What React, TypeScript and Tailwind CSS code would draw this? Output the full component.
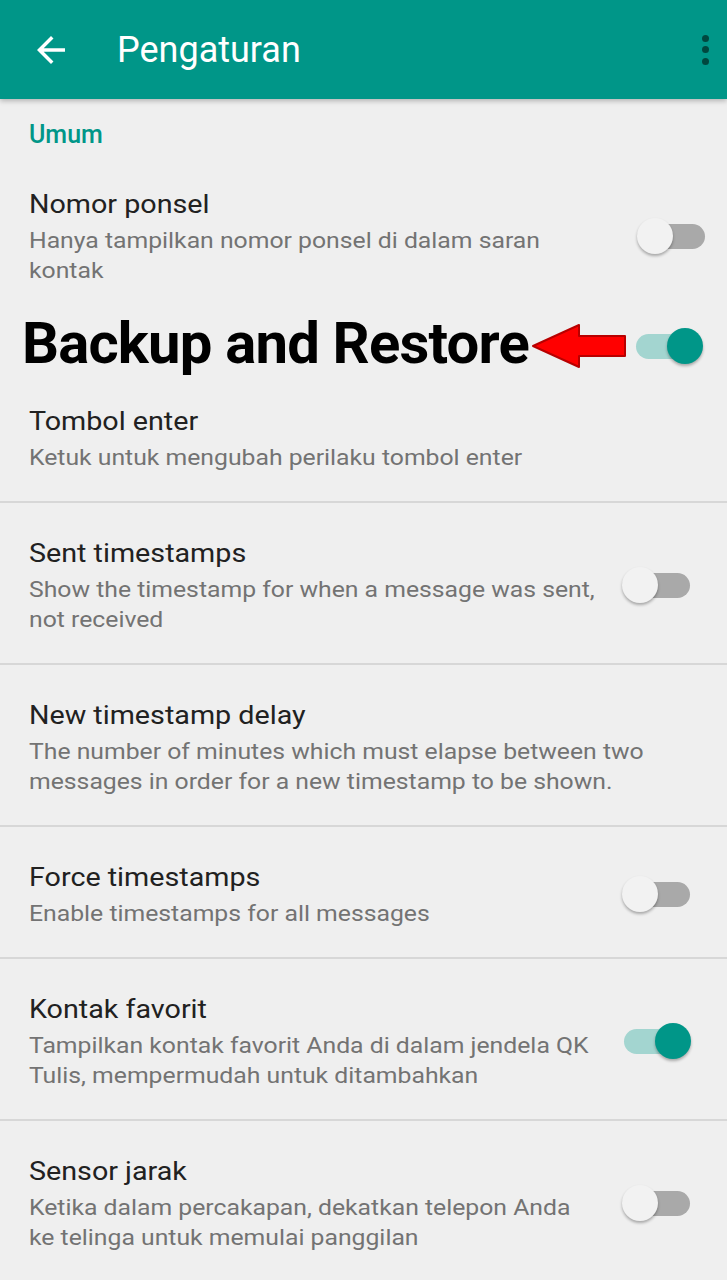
import React from "react";

// =============================================================================
// Settings data
// =============================================================================
type Row = {
  title: string;
  lines: string[];
  toggle?: "on" | "off";
};

const LOWER_ROWS: Row[] = [
  {
    title: "Sent timestamps",
    lines: ["Show the timestamp for when a message was sent,", "not received"],
    toggle: "off",
  },
  {
    title: "New timestamp delay",
    lines: [
      "The number of minutes which must elapse between two",
      "messages in order for a new timestamp to be shown.",
    ],
  },
  {
    title: "Force timestamps",
    lines: ["Enable timestamps for all messages"],
    toggle: "off",
  },
  {
    title: "Kontak favorit",
    lines: ["Tampilkan kontak favorit Anda di dalam jendela QK", "Tulis, mempermudah untuk ditambahkan"],
    toggle: "on",
  },
  {
    title: "Sensor jarak",
    lines: ["Ketika dalam percakapan, dekatkan telepon Anda", "ke telinga untuk memulai panggilan"],
    toggle: "off",
  },
];

// =============================================================================
// Pieces
// =============================================================================
function Toggle({ on }: { on: boolean }) {
  return (
    <div className="relative ml-auto h-[38px] w-[69px] shrink-0">
      <div
        className={
          on
            ? "absolute left-[2px] top-[7px] h-[25px] w-[60px] rounded-full bg-[#a3d5d0]"
            : "absolute right-[1px] top-[7px] h-[25px] w-[60px] rounded-full bg-[#a9a9a9]"
        }
      />
      <div
        className={
          on
            ? "absolute right-0 top-[1px] h-[36px] w-[36px] rounded-full bg-[#009688] shadow-[0_2px_3px_rgba(0,0,0,0.3)]"
            : "absolute left-0 top-[1px] h-[36px] w-[36px] rounded-full bg-[#f2f2f2] shadow-[0_2px_3px_rgba(0,0,0,0.3)]"
        }
      />
    </div>
  );
}

// the source text is a little wider than plain Roboto, so stretch it
function Texts({ title, lines }: { title: string; lines: string[] }) {
  return (
    <div className="min-w-0 origin-left scale-x-[1.125]">
      <div className="whitespace-nowrap text-[25.5px] leading-[36px] text-[#212121]">{title}</div>
      <div className="mt-[4px] text-[22px] leading-[30px] text-[#737373]">
        {lines.map((l) => (
          <div key={l} className="whitespace-nowrap">
            {l}
          </div>
        ))}
      </div>
    </div>
  );
}

function Divider() {
  return <div className="h-[2px] bg-[#d7d7d7]" />;
}

function RedArrow() {
  return (
    <svg width="96" height="46" viewBox="0 0 96 46" className="shrink-0">
      <path
        d="M2 23 L48 2 L48 13 L94 13 L94 33 L48 33 L48 44 Z"
        fill="#ff0000"
        stroke="#b80000"
        strokeWidth="2"
        strokeLinejoin="round"
      />
    </svg>
  );
}

// =============================================================================
// App
// =============================================================================
export default function App() {
  return (
    <div className="min-h-screen overflow-hidden bg-[#efefef] font-['Roboto',sans-serif]">
      {/* Toolbar */}
      <header className="relative z-10 flex h-[99px] items-center bg-[#009688] shadow-[0_2px_5px_rgba(0,0,0,0.25)]">
        <svg width="42" height="42" viewBox="0 0 24 24" className="ml-[30px] shrink-0" fill="#ffffff">
          <path d="M20 11H7.83l5.59-5.59L12 4l-8 8 8 8 1.41-1.41L7.83 13H20v-2z" />
        </svg>
        <h1 className="ml-[45px] text-[36px] leading-none text-white">Pengaturan</h1>
        <div className="ml-auto mr-[18px] flex flex-col items-center gap-[4.5px]">
          <span className="h-[7px] w-[7px] rounded-full bg-[#00483f]" />
          <span className="h-[7px] w-[7px] rounded-full bg-[#00483f]" />
          <span className="h-[7px] w-[7px] rounded-full bg-[#00483f]" />
        </div>
      </header>

      {/* Umum section */}
      <div className="px-[29px] pt-[22px] text-[25px] font-medium leading-[28px] text-[#009688]">Umum</div>

      <div className="flex items-center pl-[29px] pr-[21px] pt-[37px]">
        <Texts title="Nomor ponsel" lines={["Hanya tampilkan nomor ponsel di dalam saran", "kontak"]} />
        <Toggle on={false} />
      </div>

      <div className="mt-[22px] flex h-[70px] items-center pl-[22px] pr-[24px]">
        <span className="whitespace-nowrap text-[58px] font-bold leading-none tracking-[-0.8px] text-black">
          Backup and Restore
        </span>
        <div className="ml-[2px] mt-[6px] shrink-0">
          <RedArrow />
        </div>
        <div className="ml-auto mt-[6px]">
          <Toggle on />
        </div>
      </div>

      <div className="px-[29px] pb-[28px] pt-[25px]">
        <Texts title="Tombol enter" lines={["Ketuk untuk mengubah perilaku tombol enter"]} />
      </div>

      {LOWER_ROWS.map((row) => (
        <div key={row.title}>
          <Divider />
          <div className="flex items-center pb-[28px] pl-[29px] pr-[36px] pt-[32px]">
            <Texts title={row.title} lines={row.lines} />
            {row.toggle && <Toggle on={row.toggle === "on"} />}
          </div>
        </div>
      ))}
    </div>
  );
}
